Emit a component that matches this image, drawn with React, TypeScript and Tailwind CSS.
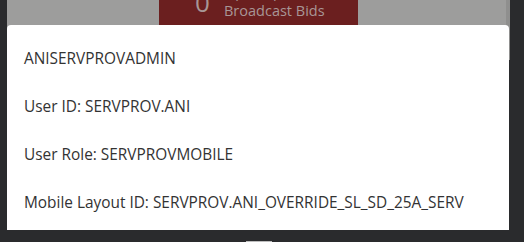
export default function App() {
  const rows = [
    "ANISERVPROVADMIN",
    "User ID: SERVPROV.ANI",
    "User Role: SERVPROVMOBILE",
    "Mobile Layout ID: SERVPROV.ANI_OVERRIDE_SL_SD_25A_SERV",
  ];

  return (
    <div
      className="relative h-[242px] w-[524px] overflow-hidden bg-[#2a2b2d]"
      style={{ fontFamily: '"Open Sans", "Noto Sans", sans-serif' }}
    >
      {/* dimmed page behind the dialog */}
      <div className="ml-[7px] flex h-[60px] w-[503px] bg-[#9d9d9c]">
        <div className="ml-[152px] flex h-full w-[199px] items-start bg-[#6b1f1f] pl-[36px] text-[#a89696]">
          <span className="-mt-[11px] w-[29px] text-[26px] leading-[26px]">0</span>
          <div className="-mt-[18px] flex flex-col text-[14.5px] leading-[19px]">
            <span>Open Spot</span>
            <span>Broadcast Bids</span>
          </div>
        </div>
        <div className="ml-auto h-full w-[4px] bg-[#8f8f8e]" />
      </div>

      {/* dialog */}
      <div className="absolute left-[7px] top-[25px] flex h-[205px] w-[502px] flex-col gap-[30px] rounded-t-[4px] bg-white px-[17px] pt-[25px] text-[15.4px] leading-[18px] text-[#333]">
        {rows.map((r) => (
          <div key={r}>{r}</div>
        ))}
      </div>

      <div className="absolute bottom-0 left-[246px] h-[1px] w-[26px] bg-[#bdbdbd]" />
    </div>
  );
}
